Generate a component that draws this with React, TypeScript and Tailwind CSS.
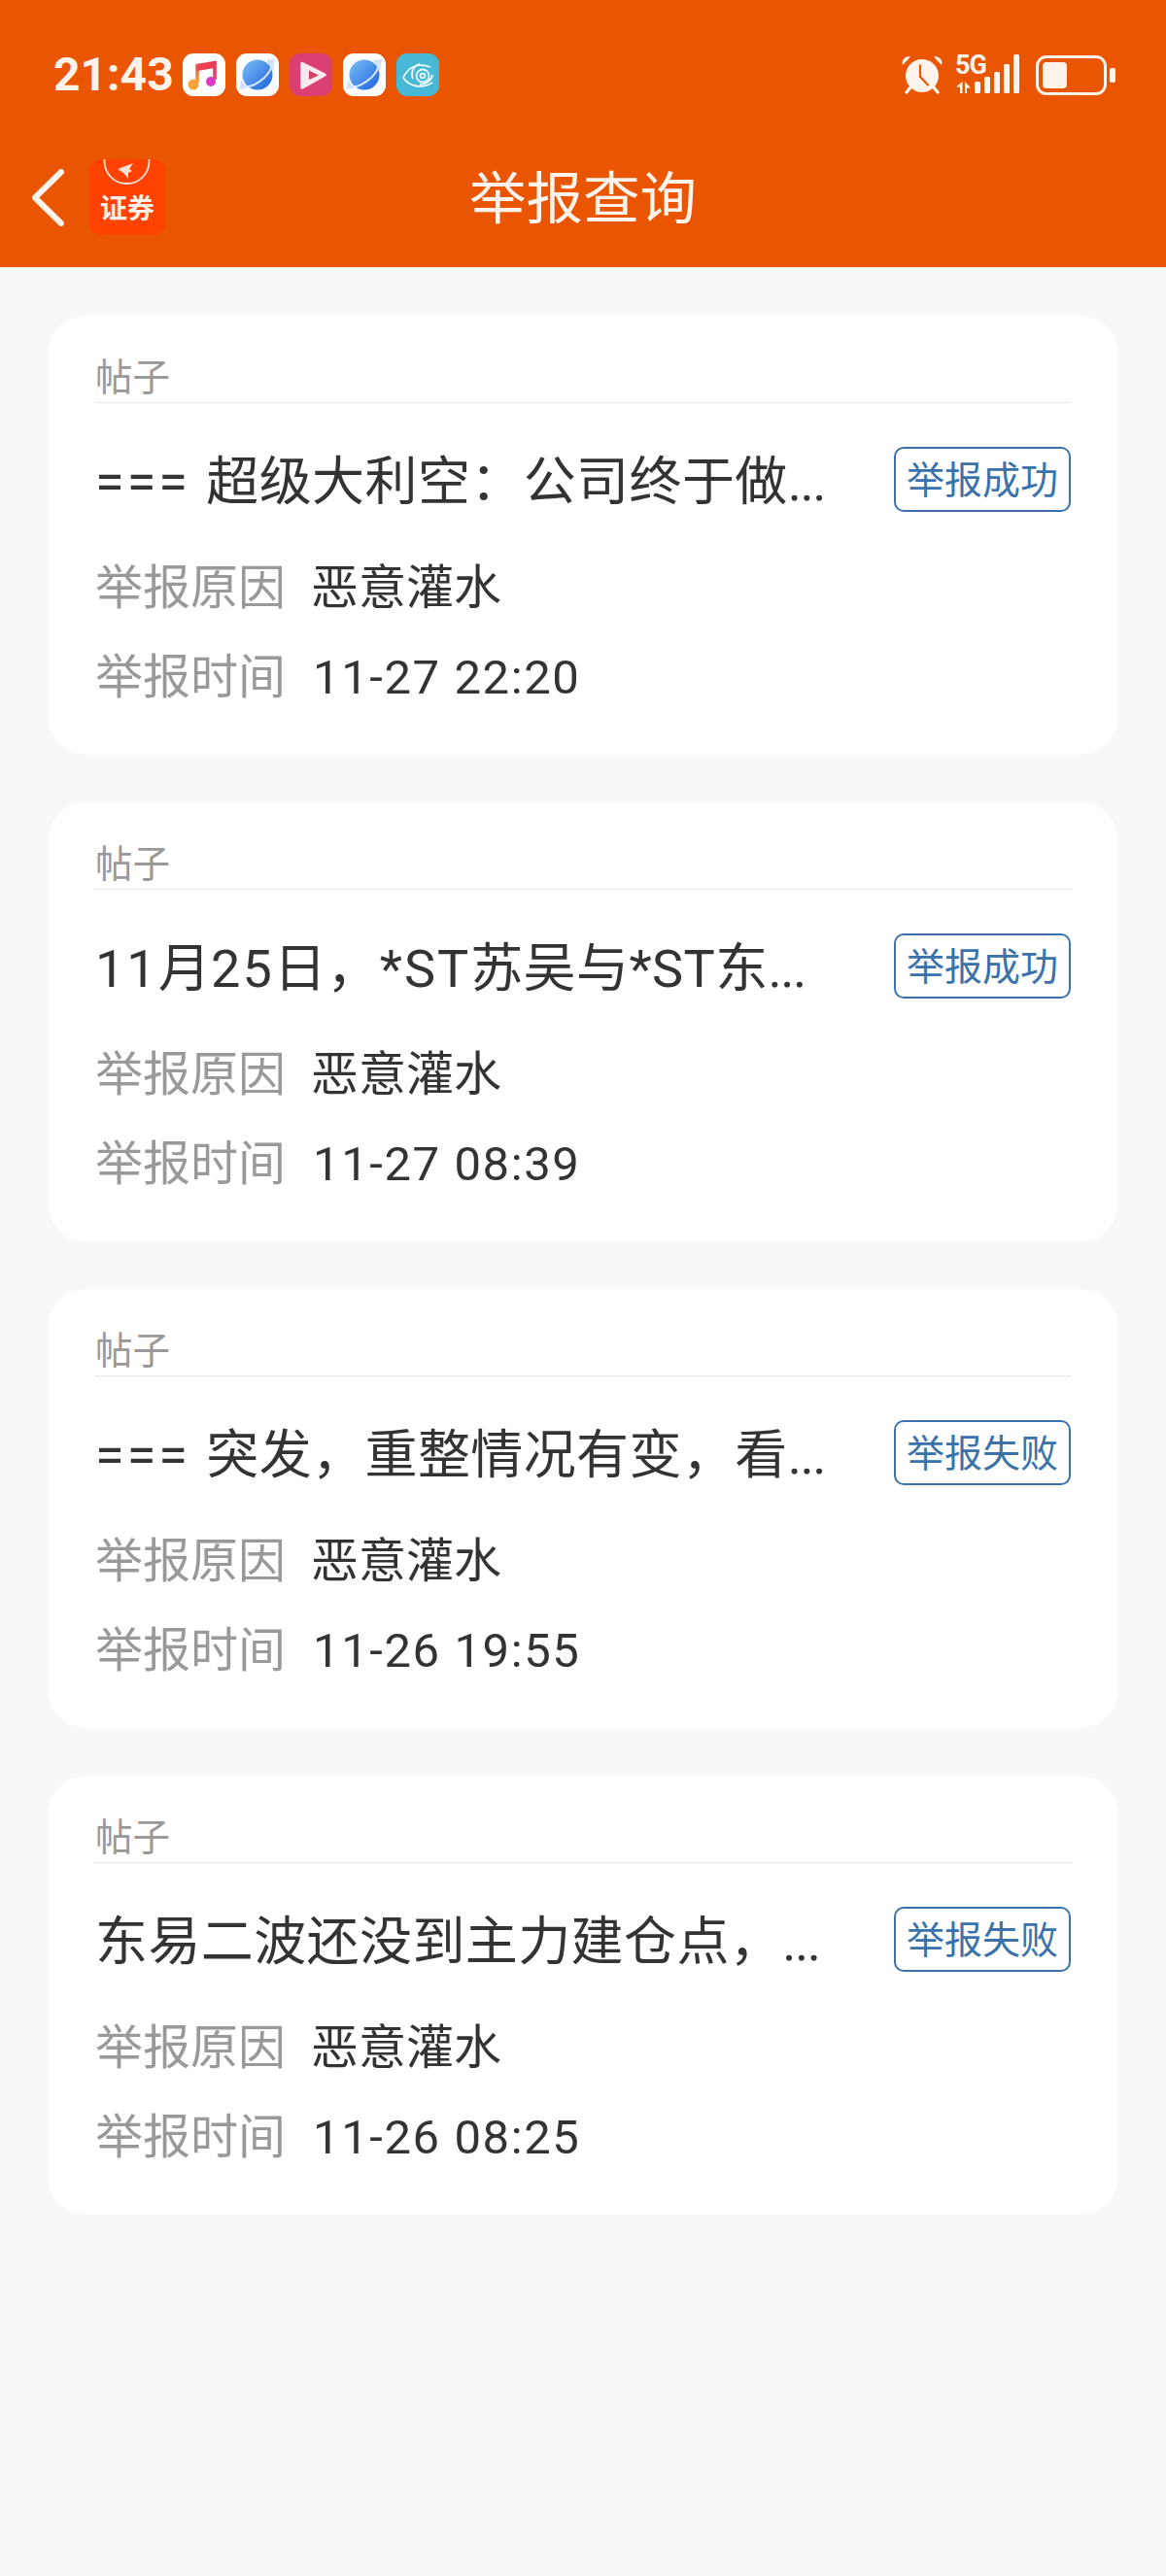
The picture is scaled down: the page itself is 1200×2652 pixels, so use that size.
import React from "react";

const font = { fontFamily: '"Roboto","Noto Sans CJK SC",sans-serif' };

function Music() {
  return (
    <div className="w-[44px] h-[44px] rounded-[11px] bg-white">
      <svg viewBox="0 0 44 44" className="w-full h-full">
        <defs>
          <linearGradient id="m" x1="0" y1="1" x2="1" y2="0">
            <stop offset="0" stopColor="#f8a13a" />
            <stop offset="0.5" stopColor="#ea4a5a" />
            <stop offset="1" stopColor="#e8345c" />
          </linearGradient>
        </defs>
        <path d="M15 30V12.5L33 9.5V27" fill="none" stroke="url(#m)" strokeWidth="3.6" />
        <path d="M15 13L33 10V15L15 18Z" fill="#ee4050" />
        <circle cx="11" cy="32" r="5.5" fill="#f6a33c" />
        <circle cx="29" cy="29" r="5" fill="#d93bc4" />
      </svg>
    </div>
  );
}

function Planet({ id }: { id: string }) {
  return (
    <div className="w-[44px] h-[44px] rounded-[11px] bg-white">
      <svg viewBox="0 0 44 44" className="w-full h-full">
        <defs>
          <linearGradient id={id} x1="0" y1="0" x2="1" y2="1">
            <stop offset="0" stopColor="#7cc0f7" />
            <stop offset="1" stopColor="#1c62dc" />
          </linearGradient>
        </defs>
        <path d="M31 7L40 6L38 18Z" fill="#cfe0fb" />
        <path d="M5 27L11 36L4 37Z" fill="#cfe0fb" />
        <circle cx="22" cy="22" r="15.5" fill={`url(#${id})`} />
        <path d="M8 34C13 35 21 32 29 25C34 20 37 14 37 10" fill="none" stroke="#d8e8fb" strokeWidth="2" />
      </svg>
    </div>
  );
}

function Play() {
  return (
    <div className="w-[44px] h-[44px] rounded-[11px] bg-[#dc3f73]">
      <svg viewBox="0 0 44 44" className="w-full h-full">
        <path d="M13 10.5L36 22L13 35Z" fill="#fbe9f0" stroke="#fbe9f0" strokeWidth="3.5" strokeLinejoin="round" />
        <path d="M20 17.5L30 22.5L20 27Z" fill="#d63f66" />
      </svg>
    </div>
  );
}

function Eye() {
  return (
    <div className="w-[44px] h-[44px] rounded-[11px] bg-[#47b8d6]">
      <svg viewBox="0 0 44 44" className="w-full h-full" fill="none" stroke="#eafaff" strokeWidth="1.8">
        <path d="M7 25C12 14 22 9 35 14" />
        <path d="M7 25C13 34 26 37 37 30" />
        <path d="M17 26C14 20 18 12 24 11" />
        <circle cx="27" cy="23" r="6.5" />
        <circle cx="27" cy="23" r="2.4" />
        <path d="M37 22C36 28 30 32 24 32" />
      </svg>
    </div>
  );
}

function Alarm() {
  return (
    <svg viewBox="0 0 42 40" className="w-[42px] h-[40px] shrink-0">
      <path d="M1 10L9 1.5C5 0 -1 4 1 10ZM41 10L33 1.5C37 0 43 4 41 10Z" fill="#fff3ec" />
      <path d="M9 33L5 38M33 33L37 38" stroke="#fff3ec" strokeWidth="3.4" strokeLinecap="round" />
      <circle cx="21" cy="21" r="17" fill="#fff3ec" />
      <path d="M19 9.5V22L27.5 31" fill="none" stroke="#e95500" strokeWidth="2.2" />
    </svg>
  );
}

function Signal() {
  return (
    <div className="relative w-[67px] h-[42px] ml-[13px] shrink-0">
      <span className="absolute left-0 top-[-3px] text-[27px] leading-[28px] font-bold text-[#fff3ec] tracking-[-1px]" style={font}>5G</span>
      <svg viewBox="0 0 67 42" className="absolute inset-0 w-full h-full">
        <path d="M7.5 28V40H5V33.5L1 33.5ZM10 28L16 34.5L12 34.5V40H10Z" fill="#fff3ec" />
        <rect x="20" y="28" width="6" height="12" rx="1.5" fill="#fff3ec" />
        <rect x="30" y="23" width="6" height="17" rx="1.5" fill="#fff3ec" />
        <rect x="40" y="18" width="6" height="22" rx="1.5" fill="#fff3ec" />
        <rect x="50" y="10" width="6" height="30" rx="1.5" fill="#fff3ec" />
        <rect x="60" y="0" width="6" height="40" rx="1.5" fill="#fff3ec" />
      </svg>
    </div>
  );
}

function Battery() {
  return (
    <div className="flex items-center ml-[16px] shrink-0">
      <div className="w-[73px] h-[41px] rounded-[11px] border-[3px] border-[#fff3ec] p-[4px]">
        <div className="w-[25px] h-full rounded-[4px] bg-[#fff3ec]" />
      </div>
      <div className="w-[6px] h-[15px] ml-[3px] rounded-[2px] bg-[#fff3ec]" />
    </div>
  );
}

function Logo() {
  return (
    <div className="relative w-[78px] h-[78px] ml-[26px] rounded-[12px] bg-[#ff4200] overflow-hidden shrink-0 flex items-end justify-center">
      <svg viewBox="0 0 78 40" className="absolute left-0 top-0 w-[78px] h-[40px]">
        <circle cx="38.5" cy="2" r="23" fill="none" stroke="#ffe1d4" strokeWidth="1.8" />
        <path d="M29 10L45 4L41 10L44 12L40 14L40 20L35 14Z" fill="#ffe1d4" />
      </svg>
      <span className="text-[28px] leading-[40px] mb-[6px] font-bold text-[#fff0e8] whitespace-nowrap" style={{ fontFamily: '"Liberation Serif","Noto Sans CJK SC",serif' }}>证券</span>
    </div>
  );
}

type Part = [string, "eq" | "num" | "plain" | "dots"];

function Title({ parts }: { parts: Part[] }) {
  return (
    <span className="text-[54px] leading-[67px] pt-[6px] text-[#333333] whitespace-nowrap">
      {parts.map(([t, kind], i) => {
        if (kind === "eq") return <span key={i} className="tracking-[3px]">{t}</span>;
        if (kind === "num") return <span key={i} className="tracking-[2px]">{t}</span>;
        if (kind === "dots") return <span key={i} className="tracking-[-1.5px]">{t}</span>;
        return <span key={i} className="tracking-[0.4px]">{t}</span>;
      })}
    </span>
  );
}

function Card({ title, tag, time }: { title: Part[]; tag: string; time: string }) {
  return (
    <div className="bg-white rounded-[40px] px-[49px] h-[452px]" style={font}>
      <div className="pt-[35px] h-[90px] border-b border-[#e9eaec] text-[38.5px] leading-[57px] text-[#999999]">帖子</div>
      <div className="flex items-center justify-between mt-[45px] h-[67px]">
        <Title parts={title} />
        <span className="w-[182px] h-[67px] rounded-[10px] border-2 border-[#3a72ab] text-[39px] leading-[67px] text-[#3a72ab] text-center whitespace-nowrap">{tag}</span>
      </div>
      <div className="flex items-center mt-[43px] h-[66px] pt-[6px] text-[49px] whitespace-nowrap">
        <span className="text-[#999999] w-[222px]">举报原因</span>
        <span className="text-[#333333]">恶意灌水</span>
      </div>
      <div className="flex items-center mt-[26px] h-[66px] pt-[6px] text-[49px] whitespace-nowrap">
        <span className="text-[#999999] w-[224px]">举报时间</span>
        <span className="text-[#333333] tracking-[1.6px]">{time}</span>
      </div>
    </div>
  );
}

const items: { title: Part[]; tag: string; time: string }[] = [
  { title: [["=== ", "eq"], ["超级大利空：公司终于做", "plain"], ["...", "dots"]], tag: "举报成功", time: "11-27 22:20" },
  { title: [["11", "num"], ["月", "plain"], ["25", "num"], ["日，", "plain"], ["*ST", "num"], ["苏吴与", "plain"], ["*ST", "plain"], ["东", "plain"], ["...", "dots"]], tag: "举报成功", time: "11-27 08:39" },
  { title: [["=== ", "eq"], ["突发，重整情况有变，看", "plain"], ["...", "dots"]], tag: "举报失败", time: "11-26 19:55" },
  { title: [["东易二波还没到主力建仓点，", "plain"], ["...", "dots"]], tag: "举报失败", time: "11-26 08:25" },
];

export default function App() {
  return (
    <div className="w-[1200px] min-h-[2652px] bg-[#f7f8fa]" style={font}>
      <div className="bg-[#e95500] h-[275px] pt-[55px]">
        <div className="flex items-center h-[44px] pl-[55px] pr-[52px]">
          <span className="text-[48px] leading-[44px] font-bold text-[#fff3ec] w-[133px]">21:43</span>
          <div className="flex gap-[11px]">
            <Music />
            <Planet id="p1" />
            <Play />
            <Planet id="p2" />
            <Eye />
          </div>
          <div className="flex-1" />
          <Alarm />
          <Signal />
          <Battery />
        </div>
        <div className="relative flex items-center h-[78px] mt-[65px] pl-[33px]">
          <svg viewBox="0 0 33 59" className="w-[33px] h-[59px] shrink-0" fill="none" stroke="#fff3ec" strokeWidth="6" strokeLinecap="round" strokeLinejoin="round">
            <path d="M30 3L3 29.5L30 56" />
          </svg>
          <Logo />
          <span className="absolute left-0 right-0 top-[2px] text-center text-[58.5px] leading-[78px] text-[#fff3ec]">举报查询</span>
        </div>
      </div>
      <div className="flex flex-col gap-[49px] px-[49px] pt-[50px]">
        {items.map((it) => (
          <Card key={it.time} {...it} />
        ))}
      </div>
    </div>
  );
}
